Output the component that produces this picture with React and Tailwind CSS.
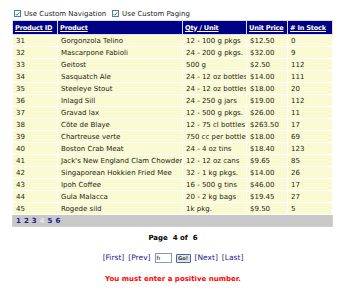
import React from 'react';

const ROWS = [
  ['31', 'Gorgonzola Telino', '12 - 100 g pkgs', '$12.50', '0'],
  ['32', 'Mascarpone Fabioli', '24 - 200 g pkgs.', '$32.00', '9'],
  ['33', 'Geitost', '500 g', '$2.50', '112'],
  ['34', 'Sasquatch Ale', '24 - 12 oz bottles', '$14.00', '111'],
  ['35', 'Steeleye Stout', '24 - 12 oz bottles', '$18.00', '20'],
  ['36', 'Inlagd Sill', '24 - 250 g jars', '$19.00', '112'],
  ['37', 'Gravad lax', '12 - 500 g pkgs.', '$26.00', '11'],
  ['38', 'Côte de Blaye', '12 - 75 cl bottles', '$263.50', '17'],
  ['39', 'Chartreuse verte', '750 cc per bottle', '$18.00', '69'],
  ['40', 'Boston Crab Meat', '24 - 4 oz tins', '$18.40', '123'],
  ['41', "Jack's New England Clam Chowder", '12 - 12 oz cans', '$9.65', '85'],
  ['42', 'Singaporean Hokkien Fried Mee', '32 - 1 kg pkgs.', '$14.00', '26'],
  ['43', 'Ipoh Coffee', '16 - 500 g tins', '$46.00', '17'],
  ['44', 'Gula Malacca', '20 - 2 kg bags', '$19.45', '27'],
  ['45', 'Rogede sild', '1k pkg.', '$9.50', '5'],
];

const HEADERS = ['Product ID', 'Product', 'Qty / Unit', 'Unit Price', '# In Stock'];
const WIDTHS = ['w-[45px]', 'w-[125px]', 'w-[64px]', 'w-[41px]', 'w-[45px]'];

function Check({ label }) {
  return (
    <label className="flex items-center gap-[3px]">
      <span className="w-[7px] h-[7px] border border-[#4a7ab8] bg-white flex items-center justify-center">
        <svg viewBox="0 0 8 8" className="w-[6px] h-[6px]">
          <path d="M1 4 L3 6 L7 1" stroke="#23a623" strokeWidth="1.6" fill="none" />
        </svg>
      </span>
      <span>{label}</span>
    </label>
  );
}

export default function App() {
  return (
    <div className="w-[346px] h-[291px] bg-white text-[7px] text-[#222] font-['DejaVu_Sans',Verdana,sans-serif] overflow-hidden">
      {/* Options */}
      <div className="flex items-center gap-[6px] pl-[14px] pt-[7px] h-[20px] leading-[10px]">
        <Check label="Use Custom Navigation" />
        <Check label="Use Custom Paging" />
      </div>

      {/* Grid */}
      <table className="ml-[12px] w-[320px] table-fixed border-collapse border border-[#cfcfcf]">
        <thead>
          <tr className="bg-[#000084] h-[14px]">
            {HEADERS.map((h, i) => (
              <th key={h} className={`${WIDTHS[i]} border border-[#dcdcf0] px-[2px] text-left text-[6.6px] tracking-[-0.2px] font-bold text-white underline leading-[12px] whitespace-nowrap overflow-hidden`}>
                {h}
              </th>
            ))}
          </tr>
        </thead>
        <tbody>
          {ROWS.map((row) => (
            <tr key={row[0]} className="bg-[#fafad2] h-[12px]">
              {row.map((c, i) => (
                <td key={i} className="border border-white px-[3px] whitespace-nowrap overflow-hidden leading-[10px]">
                  {c}
                </td>
              ))}
            </tr>
          ))}
          <tr className="bg-[#c8c8c8] h-[12px]">
            <td colSpan={5} className="px-[3px] leading-[10px] font-bold text-[#1a1a8c]">
              <span className="inline-flex gap-[3px]">
                <span>1</span>
                <span>2</span>
                <span>3</span>
                <span className="text-[#e8e8e8]">4</span>
                <span>5</span>
                <span>6</span>
              </span>
            </td>
          </tr>
        </tbody>
      </table>

      {/* Paging */}
      <div className="flex flex-col items-center">
        <div className="mt-[6px] font-bold text-black leading-[10px] whitespace-pre">Page  4 of  6</div>
        <div className="mt-[10px] flex items-center gap-[4px] text-[7.5px] text-[#1a1a8c] leading-[10px]">
          <span>[First]</span>
          <span>[Prev]</span>
          <span className="w-[17px] h-[10px] border border-[#7f9db9] bg-white text-black text-[6px] leading-[8px] pl-[1px]">h</span>
          <span className="w-[15px] h-[9px] border border-[#3a6ea5] rounded-[1px] bg-[#e4e4e4] text-[#333] text-[5px] font-bold leading-[7px] text-center">Go!</span>
          <span>[Next]</span>
          <span>[Last]</span>
        </div>
        <div className="mt-[11px] font-bold text-[#ff0000] leading-[10px]">You must enter a positive number.</div>
      </div>
    </div>
  );
}
